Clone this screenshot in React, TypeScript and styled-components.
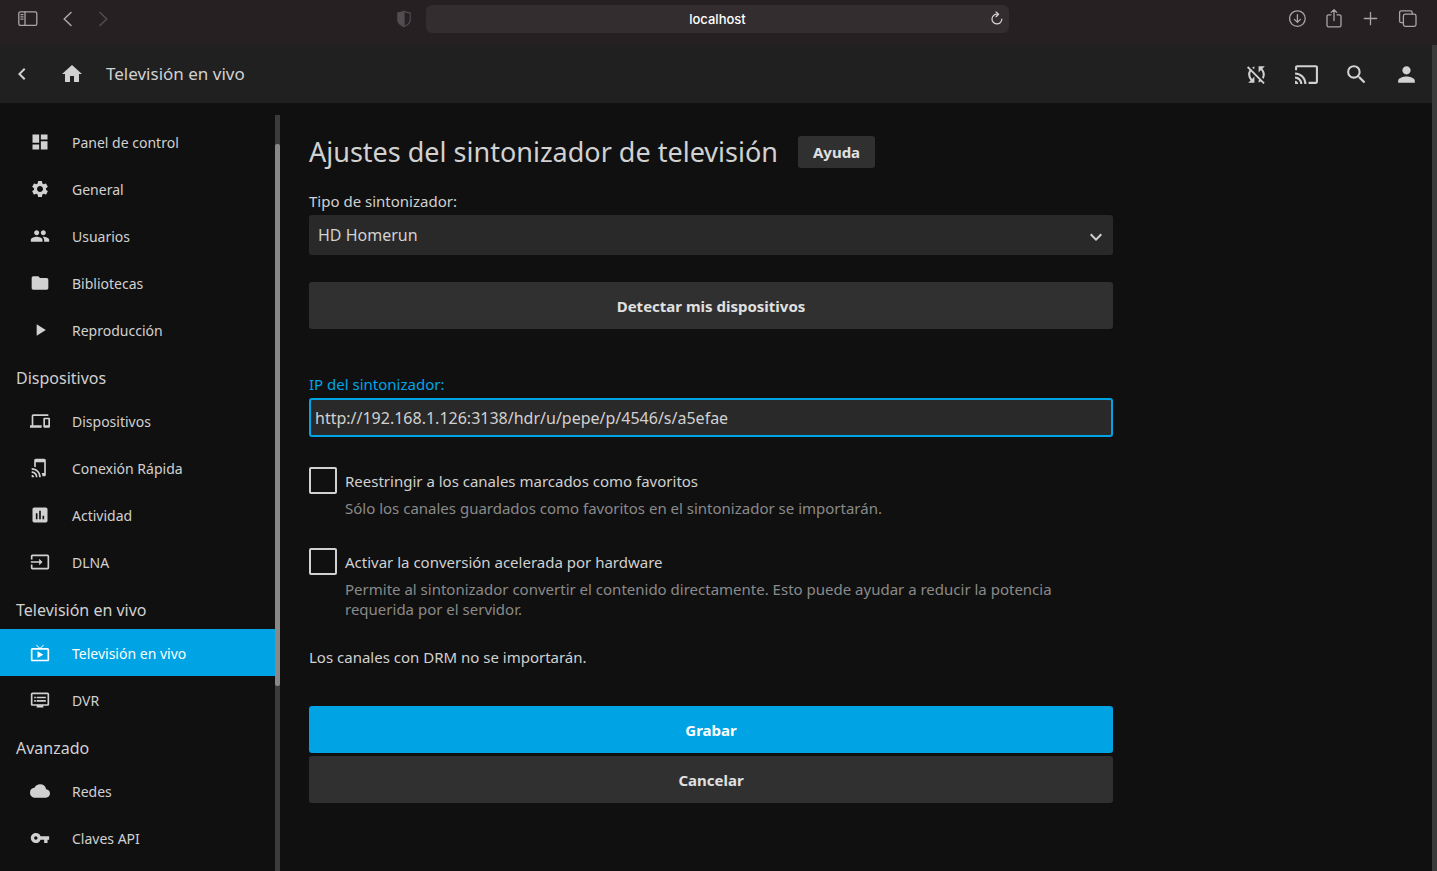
import React from 'react';
import styled, { createGlobalStyle } from 'styled-components';
import {
  MdAssessment,
  MdCast,
  MdChevronLeft,
  MdCloud,
  MdDashboard,
  MdDevices,
  MdDvr,
  MdFolder,
  MdHome,
  MdInput,
  MdKeyboardArrowDown,
  MdLiveTv,
  MdPeople,
  MdPerson,
  MdPlayArrow,
  MdSearch,
  MdSettings,
  MdSyncDisabled,
  MdTapAndPlay,
  MdVpnKey,
} from 'react-icons/md';
import type { IconType } from 'react-icons';

const accent = '#00a4e4';
const textColor = '#d1d1d1';

const GlobalStyle = createGlobalStyle`
  * { box-sizing: border-box; }
  body {
    margin: 0;
    background: #101010;
    color: ${textColor};
    font-family: 'Noto Sans', sans-serif;
    font-size: 15px;
    line-height: 20px;
  }
  button, input, select { font: inherit; color: inherit; }
  button { border: 0; padding: 0; background: none; cursor: pointer; }
`;

const Page = styled.div`
  display: flex;
  flex-direction: column;
  height: 100vh;
  overflow: hidden;
`;

const BrowserBar = styled.header`
  display: grid;
  grid-template-columns: 1fr minmax(200px, 583px) 1fr;
  height: 45px;
  flex-shrink: 0;
  padding: 5px 20px 0 18px;
  background: #262023;
  color: #a9a4a7;
`;

const BarGroup = styled.div<{ $end?: boolean }>`
  display: flex;
  align-items: center;
  justify-content: ${(p) => (p.$end ? 'flex-end' : 'flex-start')};
  gap: ${(p) => (p.$end ? '18px' : '20px')};
  height: 28px;
`;

const BarButton = styled.button<{ $dim?: boolean; $push?: boolean }>`
  display: flex;
  color: ${(p) => (p.$dim ? '#524c50' : 'inherit')};
  margin-left: ${(p) => (p.$push ? 'auto' : '0')};
  margin-right: ${(p) => (p.$push ? '14px' : '0')};
`;

const AddressBar = styled.div`
  display: flex;
  align-items: center;
  height: 28px;
  padding: 0 4px 0 20px;
  border-radius: 6px;
  background: #332d30;
  color: #ffffff;
`;

const AddressInput = styled.input`
  flex: 1;
  min-width: 0;
  border: 0;
  outline: 0;
  padding: 0;
  background: none;
  text-align: center;
  font-family: Inter, sans-serif;
  font-size: 13px;
  font-weight: 500;
`;

const ReloadButton = styled.button`
  display: flex;
  color: #d8d5d7;
`;

const Viewport = styled.div`
  display: flex;
  flex: 1;
  min-height: 0;
`;

const AppArea = styled.div`
  display: flex;
  flex-direction: column;
  flex: 1;
  min-width: 0;
`;

const PageScrollbar = styled.div`
  width: 5px;
  background: #3b3b3b;
`;

const AppHeader = styled.header`
  display: flex;
  align-items: center;
  justify-content: space-between;
  height: 58px;
  flex-shrink: 0;
  padding: 0 13px 0 10px;
  background: #202020;
`;

const HeaderGroup = styled.div<{ $gap: number }>`
  display: flex;
  align-items: center;
  gap: ${(p) => p.$gap}px;
`;

const IconButton = styled.button`
  display: flex;
`;

const HeaderTitle = styled.h3`
  margin: 0 0 0 -4px;
  font-size: 17px;
  font-weight: 400;
  line-height: 24px;
`;

const Body = styled.div`
  display: flex;
  flex: 1;
  min-height: 0;
`;

const Sidebar = styled.aside`
  display: flex;
  width: 280px;
  flex-shrink: 0;
`;

const Nav = styled.nav`
  flex: 1;
  padding-top: 15px;
  overflow: hidden;
`;

const NavHeading = styled.h3`
  margin: 0;
  height: 44px;
  padding: 14px 16px 0;
  font-size: 16px;
  font-weight: 400;
  line-height: 22px;
`;

const NavLink = styled.a<{ $active?: boolean }>`
  display: flex;
  align-items: center;
  gap: 22px;
  height: 47px;
  padding-left: 30px;
  background: ${(p) => (p.$active ? accent : 'transparent')};
  color: ${(p) => (p.$active ? '#ffffff' : 'inherit')};
  font-size: 14px;
  text-decoration: none;
`;

const NavLabel = styled.span`
  padding-top: 2px;
`;

const ScrollTrack = styled.div`
  width: 5px;
  margin-top: 12px;
  padding-top: 29px;
  background: #3b3b3b;
`;

const ScrollThumb = styled.div`
  height: 542px;
  border-radius: 2px;
  background: #888888;
`;

const Main = styled.main`
  flex: 1;
  min-width: 0;
  padding: 32px 29px;
`;

const Form = styled.form`
  display: flex;
  flex-direction: column;
  max-width: 804px;
`;

const TitleRow = styled.div`
  display: flex;
  align-items: center;
  gap: 20px;
  margin-bottom: 22px;
`;

const Title = styled.h1`
  margin: 0;
  font-size: 27px;
  font-weight: 400;
  line-height: 34px;
`;

const FieldLabel = styled.label<{ $focused?: boolean }>`
  margin-bottom: 4px;
  color: ${(p) => (p.$focused ? accent : 'inherit')};
`;

const SelectWrap = styled.div`
  position: relative;
  margin-bottom: 27px;
`;

const Select = styled.select`
  display: block;
  width: 100%;
  height: 40px;
  padding: 0 36px 0 9px;
  border: 0;
  border-radius: 3px;
  appearance: none;
  background: #292929;
  font-size: 16px;
`;

const SelectArrow = styled(MdKeyboardArrowDown)`
  position: absolute;
  right: 5px;
  top: 10px;
  pointer-events: none;
`;

const TextInput = styled.input`
  height: 39px;
  margin-bottom: 30px;
  padding: 0 4px;
  border: 2px solid ${accent};
  border-radius: 3px;
  outline: 0;
  background: #292929;
  font-size: 16px;
`;

const Button = styled.button<{ $primary?: boolean }>`
  height: 47px;
  border-radius: 3px;
  background: ${(p) => (p.$primary ? accent : '#303030')};
  color: ${(p) => (p.$primary ? '#ffffff' : '#e0e0e0')};
  font-weight: 700;
`;

const HelpLink = styled.a`
  padding: 6px 15px;
  border-radius: 3px;
  background: #303030;
  color: #e0e0e0;
  font-weight: 700;
  text-decoration: none;
`;

const DetectRow = styled.div`
  display: grid;
  margin-bottom: 45px;
`;

const CheckRow = styled.div`
  display: grid;
  grid-template-columns: 28px 1fr;
  column-gap: 8px;
  row-gap: 4px;
  margin-bottom: 28px;

  & + & {
    margin-top: 2px;
  }
`;

const Checkbox = styled.input`
  width: 28px;
  height: 27px;
  margin: 0;
  border: 2px solid ${textColor};
  border-radius: 2px;
  appearance: none;
`;

const CheckLabel = styled.label`
  padding-top: 4px;
`;

const CheckHelp = styled.div`
  grid-column: 2;
  color: #8a8a8a;
`;

const Note = styled.p`
  margin: 0 0 39px;
`;

const Actions = styled.div`
  display: grid;
  gap: 3px;
`;

type Item = { icon: IconType; label: string; active?: boolean };
type Section = { heading?: string; items: Item[] };

const sections: Section[] = [
  {
    items: [
      { icon: MdDashboard, label: 'Panel de control' },
      { icon: MdSettings, label: 'General' },
      { icon: MdPeople, label: 'Usuarios' },
      { icon: MdFolder, label: 'Bibliotecas' },
      { icon: MdPlayArrow, label: 'Reproducción' },
    ],
  },
  {
    heading: 'Dispositivos',
    items: [
      { icon: MdDevices, label: 'Dispositivos' },
      { icon: MdTapAndPlay, label: 'Conexión Rápida' },
      { icon: MdAssessment, label: 'Actividad' },
      { icon: MdInput, label: 'DLNA' },
    ],
  },
  {
    heading: 'Televisión en vivo',
    items: [
      { icon: MdLiveTv, label: 'Televisión en vivo', active: true },
      { icon: MdDvr, label: 'DVR' },
    ],
  },
  {
    heading: 'Avanzado',
    items: [
      { icon: MdCloud, label: 'Redes' },
      { icon: MdVpnKey, label: 'Claves API' },
    ],
  },
];

const stroke = {
  fill: 'none',
  stroke: 'currentColor',
  strokeLinecap: 'round' as const,
  strokeLinejoin: 'round' as const,
};

const PanelIcon = () => (
  <svg width="20" height="16" viewBox="0 0 20 16" {...stroke} strokeWidth="1.3">
    <rect x="0.8" y="0.8" width="18" height="13.6" rx="1.6" />
    <path d="M7 0.8v13.6M3 3.6h2M3 5.9h2M3 8.2h2" />
  </svg>
);

const ChevronIcon = ({ right }: { right?: boolean }) => (
  <svg width="20" height="20" viewBox="0 0 20 20" {...stroke} strokeWidth="1.6">
    <path d={right ? 'M7 3.5l6.8 6.5L7 16.5' : 'M13 3.5L6.2 10l6.8 6.5'} />
  </svg>
);

const ShieldIcon = () => (
  <svg width="16" height="18" viewBox="0 0 16 18" {...stroke} strokeWidth="1.2">
    <path d="M8 1.2c1.8 1.2 3.8 1.6 6.2 1.7v7.200c0 3-3 5.200-6.200 6.500-3.200-1.300-6.200-3.500-6.200-6.500V2.900C4.200 2.800 6.200 2.400 8 1.200z" />
    <path d="M8.600 1.200v15.400c-3.800-1.300-6.800-3.500-6.800-6.500V2.900C4.200 2.800 6.800 2.400 8.600 1.200z" fill="currentColor" stroke="none" />
  </svg>
);

const ReloadIcon = () => (
  <svg width="16" height="16" viewBox="0 0 16 16" {...stroke} strokeWidth="1.2">
    <path d="M8.600 3.200A4.900 4.900 0 1 0 12.800 8.200" />
    <path d="M7 0.900l2.600 2.400L7 5.700" />
  </svg>
);

const DownloadIcon = () => (
  <svg width="18" height="18" viewBox="0 0 18 18" {...stroke} strokeWidth="1.3">
    <circle cx="8.400" cy="8.600" r="7.800" />
    <path d="M8.400 4.600v7.600M5.400 9.400l3 3 3-3" />
  </svg>
);

const ShareIcon = () => (
  <svg width="18" height="20" viewBox="0 0 18 20" {...stroke} strokeWidth="1.3">
    <path d="M6 5.800H3.600A1.600 1.600 0 0 0 2 7.400v8.800a1.600 1.600 0 0 0 1.600 1.600h10.800a1.600 1.600 0 0 0 1.600-1.600V7.400a1.600 1.600 0 0 0-1.600-1.600H12" />
    <path d="M9 11.500V0.800M6.200 3.400L9 0.700l2.800 2.700" />
  </svg>
);

const PlusIcon = () => (
  <svg width="18" height="18" viewBox="0 0 18 18" {...stroke} strokeWidth="1.300">
    <path d="M9.500 2.300v12.400M3.300 8.500h12.400" />
  </svg>
);

const TabsIcon = () => (
  <svg width="20" height="18" viewBox="0 0 20 18" {...stroke} strokeWidth="1.3">
    <rect x="6.400" y="4.200" width="12.600" height="12.200" rx="1.800" />
    <path d="M6.200 12.600H4.200a1.600 1.600 0 0 1-1.600-1.600V2.400A1.600 1.600 0 0 1 4.200 0.800h9.400a1.600 1.600 0 0 1 1.600 1.600v1.600" />
  </svg>
);

export default function App() {
  return (
    <Page>
      <GlobalStyle />
      <BrowserBar>
        <BarGroup>
          <BarButton aria-label="Barra lateral"><PanelIcon /></BarButton>
          <HeaderGroup $gap={15}>
            <BarButton aria-label="Atrás"><ChevronIcon /></BarButton>
            <BarButton aria-label="Adelante" $dim><ChevronIcon right /></BarButton>
          </HeaderGroup>
          <BarButton aria-label="Privacidad" $dim $push><ShieldIcon /></BarButton>
        </BarGroup>
        <AddressBar>
          <AddressInput aria-label="Dirección" defaultValue="localhost" />
          <ReloadButton aria-label="Recargar"><ReloadIcon /></ReloadButton>
        </AddressBar>
        <BarGroup $end>
          <BarButton aria-label="Descargas"><DownloadIcon /></BarButton>
          <BarButton aria-label="Compartir"><ShareIcon /></BarButton>
          <BarButton aria-label="Pestaña nueva"><PlusIcon /></BarButton>
          <BarButton aria-label="Pestañas"><TabsIcon /></BarButton>
        </BarGroup>
      </BrowserBar>
      <Viewport>
        <AppArea>
          <AppHeader>
            <HeaderGroup $gap={26}>
              <IconButton aria-label="Volver"><MdChevronLeft size={24} /></IconButton>
              <IconButton aria-label="Inicio"><MdHome size={24} /></IconButton>
              <HeaderTitle>Televisión en vivo</HeaderTitle>
            </HeaderGroup>
            <HeaderGroup $gap={25}>
              <IconButton aria-label="Sincronización"><MdSyncDisabled size={25} /></IconButton>
              <IconButton aria-label="Transmitir"><MdCast size={25} /></IconButton>
              <IconButton aria-label="Buscar"><MdSearch size={25} /></IconButton>
              <IconButton aria-label="Usuario"><MdPerson size={25} /></IconButton>
            </HeaderGroup>
          </AppHeader>
          <Body>
            <Sidebar>
              <Nav>
                {sections.map((section, i) => (
                  <React.Fragment key={i}>
                    {section.heading && <NavHeading>{section.heading}</NavHeading>}
                    {section.items.map(({ icon: Icon, label, active }) => (
                      <NavLink key={label} href="#" $active={active}>
                        <Icon size={20} />
                        <NavLabel>{label}</NavLabel>
                      </NavLink>
                    ))}
                  </React.Fragment>
                ))}
              </Nav>
              <ScrollTrack><ScrollThumb /></ScrollTrack>
            </Sidebar>
            <Main>
              <Form onSubmit={(e) => e.preventDefault()}>
                <TitleRow>
                  <Title>Ajustes del sintonizador de televisión</Title>
                  <HelpLink href="#">Ayuda</HelpLink>
                </TitleRow>
                <FieldLabel htmlFor="type">Tipo de sintonizador:</FieldLabel>
                <SelectWrap>
                  <Select id="type">
                    <option>HD Homerun</option>
                  </Select>
                  <SelectArrow size={24} />
                </SelectWrap>
                <DetectRow>
                  <Button type="button">Detectar mis dispositivos</Button>
                </DetectRow>
                <FieldLabel htmlFor="ip" $focused>IP del sintonizador:</FieldLabel>
                <TextInput id="ip" defaultValue="http://192.168.1.126:3138/hdr/u/pepe/p/4546/s/a5efae" />
                <CheckRow>
                  <Checkbox type="checkbox" id="favorites" />
                  <CheckLabel htmlFor="favorites">Reestringir a los canales marcados como favoritos</CheckLabel>
                  <CheckHelp>Sólo los canales guardados como favoritos en el sintonizador se importarán.</CheckHelp>
                </CheckRow>
                <CheckRow>
                  <Checkbox type="checkbox" id="hardware" />
                  <CheckLabel htmlFor="hardware">Activar la conversión acelerada por hardware</CheckLabel>
                  <CheckHelp>
                    Permite al sintonizador convertir el contenido directamente. Esto puede ayudar a reducir la potencia
                    requerida por el servidor.
                  </CheckHelp>
                </CheckRow>
                <Note>Los canales con DRM no se importarán.</Note>
                <Actions>
                  <Button type="submit" $primary>Grabar</Button>
                  <Button type="button">Cancelar</Button>
                </Actions>
              </Form>
            </Main>
          </Body>
        </AppArea>
        <PageScrollbar />
      </Viewport>
    </Page>
  );
}
